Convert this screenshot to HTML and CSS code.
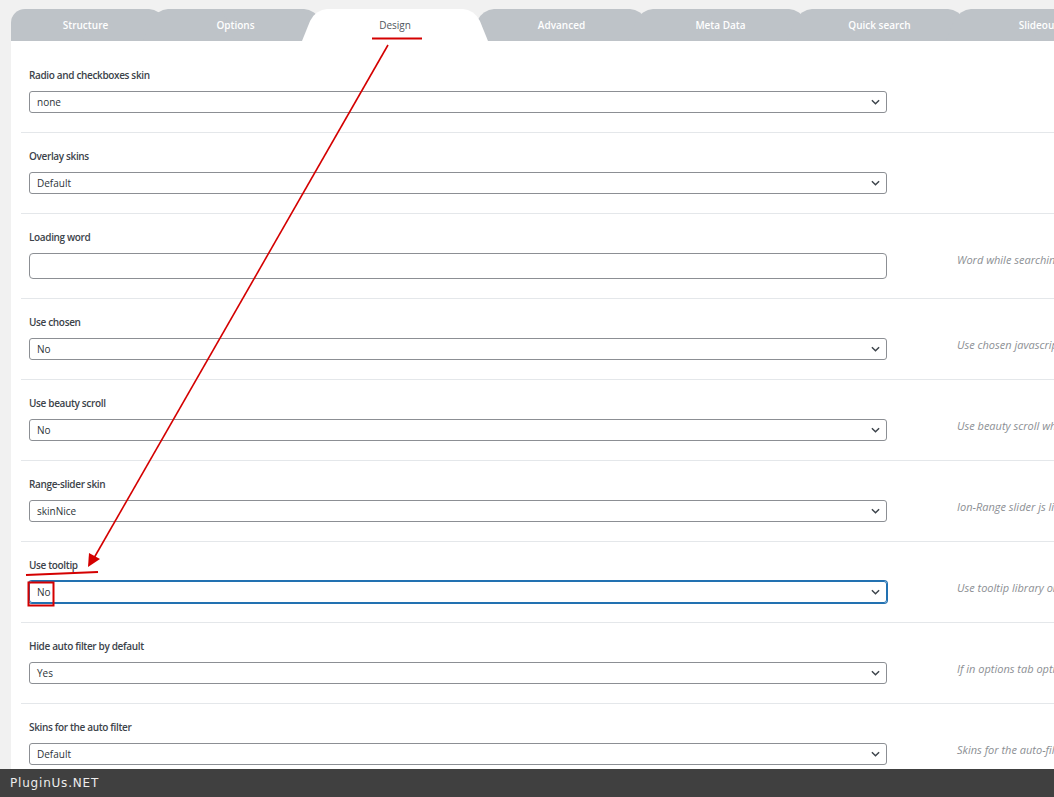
FILE: index.html
```html
<!DOCTYPE html>
<html>
<head>
    <title>Design options</title>
    <link rel="stylesheet" href="styles.css">
</head>
<body>
    <div class="page">
        <div class="tabs">
            <div class="tab first">Structure</div>
            <div class="tab">Options</div>
            <div class="tab active">Design</div>
            <div class="tab">Advanced</div>
            <div class="tab">Meta Data</div>
            <div class="tab">Quick search</div>
            <div class="tab">Slideout</div>
        </div>

        <div class="panel">
            <div class="option">
                <div class="label">Radio and checkboxes skin</div>
                <div class="select"><span>none</span><svg class="chevron" viewBox="0 0 10 6"><path d="M1 1l4 4 4-4"/></svg></div>
                <div class="desc"></div>
            </div>
            <div class="option">
                <div class="label">Overlay skins</div>
                <div class="select"><span>Default</span><svg class="chevron" viewBox="0 0 10 6"><path d="M1 1l4 4 4-4"/></svg></div>
                <div class="desc"></div>
            </div>
            <div class="option">
                <div class="label">Loading word</div>
                <div class="text-input"></div>
                <div class="desc">Word while searching is going</div>
            </div>
            <div class="option">
                <div class="label">Use chosen</div>
                <div class="select"><span>No</span><svg class="chevron" viewBox="0 0 10 6"><path d="M1 1l4 4 4-4"/></svg></div>
                <div class="desc">Use chosen javascript library on the front of your site for drop-downs.</div>
            </div>
            <div class="option">
                <div class="label">Use beauty scroll</div>
                <div class="select"><span>No</span><svg class="chevron" viewBox="0 0 10 6"><path d="M1 1l4 4 4-4"/></svg></div>
                <div class="desc">Use beauty scroll when you apply max height for taxonomy block on the front</div>
            </div>
            <div class="option">
                <div class="label">Range-slider skin</div>
                <div class="select"><span>skinNice</span><svg class="chevron" viewBox="0 0 10 6"><path d="M1 1l4 4 4-4"/></svg></div>
                <div class="desc">Ion-Range slider js library skin</div>
            </div>
            <div class="option">
                <div class="label">Use tooltip</div>
                <div class="select focused"><span>No</span><svg class="chevron" viewBox="0 0 10 6"><path d="M1 1l4 4 4-4"/></svg></div>
                <div class="desc">Use tooltip library on the front of your site</div>
            </div>
            <div class="option">
                <div class="label">Hide auto filter by default</div>
                <div class="select"><span>Yes</span><svg class="chevron" viewBox="0 0 10 6"><path d="M1 1l4 4 4-4"/></svg></div>
                <div class="desc">If in options tab option 'Set filter automatically' is Yes you can hide filter</div>
            </div>
            <div class="option">
                <div class="label">Skins for the auto filter</div>
                <div class="select"><span>Default</span><svg class="chevron" viewBox="0 0 10 6"><path d="M1 1l4 4 4-4"/></svg></div>
                <div class="desc">Skins for the auto-filter which appears on the shop page</div>
            </div>
        </div>
    </div>

    <div class="footer">PluginUs.NET</div>

    <!-- red annotation marks drawn over the screenshot -->
    <svg class="marks" width="1054" height="797" viewBox="0 0 1054 797">
        <line x1="372" y1="38.5" x2="422" y2="38.5" stroke="#d40000" stroke-width="2"/>
        <line x1="388" y1="45" x2="94" y2="558" stroke="#d40000" stroke-width="1.6"/>
        <polygon points="88,567 89,553 100,559" fill="#d40000"/>
        <line x1="26" y1="575" x2="98" y2="572" stroke="#d40000" stroke-width="2"/>
        <rect x="28.5" y="582.5" width="25" height="23" fill="none" stroke="#d40000" stroke-width="2"/>
    </svg>
</body>
</html>
```

FILE: styles.css
```css
body {
    margin: 0;
    background: #f1f1f1;
    font-family: "Open Sans", Arial, sans-serif;
    overflow: hidden;
    height: 797px;
}
.page {
    padding: 9px 0 0 11px;
}

/* tab strip */
.tabs {
    display: flex;
    height: 32px;
    width: 1200px;
}
.tab {
    position: relative;
    z-index: 1;
    width: 159px;
    flex: none;
    display: flex;
    justify-content: center;
    align-items: center;
    font-size: 10px;
    font-weight: 600;
    color: #fff;
    padding-bottom: 1px;
    box-sizing: border-box;
}
.tab::before,
.tab::after {
    content: "";
    position: absolute;
    top: 0;
    bottom: 0;
    width: calc(50% + 14px);
    background: #bec3c8;
    z-index: -1;
    transform-origin: bottom;
}
.tab::before {
    left: -13px;
    transform: skewX(-22deg);
    border-top-left-radius: 12px;
}
.tab::after {
    right: -13px;
    transform: skewX(22deg);
    border-top-right-radius: 12px;
}
.tab.first {
    width: 149px;
    margin-right: -4px;
}
.tab.first::before {
    left: 0;
    transform: none;
    border-top-left-radius: 14px;
}
.tab.active {
    z-index: 3;
    width: 160px;
    color: #50575e;
    font-weight: 400;
    margin-right: 7px;
}
.tab.active::before,
.tab.active::after {
    background: #fff;
}

/* settings panel */
.panel {
    background: #fff;
    width: 1100px;
    padding: 11px 0 0 10px;
    height: 760px;
    position: relative;
    z-index: 2;
}
.option {
    display: grid;
    grid-template-columns: 858px 1fr;
    column-gap: 70px;
    padding: 16px 0 19px 8px;
    border-bottom: 1px solid #e4e7ea;
}
.label {
    grid-column: 1 / 3;
    font-size: 10px;
    font-weight: 600;
    letter-spacing: -0.35px;
    line-height: 14px;
    color: #3c434a;
    margin-bottom: 9px;
}
.select,
.text-input {
    box-sizing: border-box;
    height: 22px;
    border: 1px solid #8c8f94;
    border-radius: 3px;
    display: flex;
    align-items: center;
    justify-content: space-between;
    padding: 0 6px 0 7px;
    font-size: 10px;
    color: #2c3338;
}
.text-input {
    height: 26px;
    border-radius: 4px;
}
.select.focused {
    border-color: #2271b1;
    box-shadow: 0 0 0 1px #2271b1;
}
.chevron {
    width: 9px;
    height: 6px;
    fill: none;
    stroke: #3c434a;
    stroke-width: 1.6;
}
.desc {
    font-size: 11px;
    font-style: italic;
    line-height: 14px;
    color: #8c8f94;
    white-space: nowrap;
}

/* bottom bar */
.footer {
    position: fixed;
    left: 0;
    bottom: 0;
    width: 100%;
    height: 28px;
    background: #404040;
    color: #ededed;
    font-family: "DejaVu Sans", Verdana, sans-serif;
    font-size: 12px;
    letter-spacing: 0.8px;
    line-height: 28px;
    padding-left: 10px;
    z-index: 5;
}
.marks {
    position: fixed;
    top: 0;
    left: 0;
    pointer-events: none;
    z-index: 6;
}
```
